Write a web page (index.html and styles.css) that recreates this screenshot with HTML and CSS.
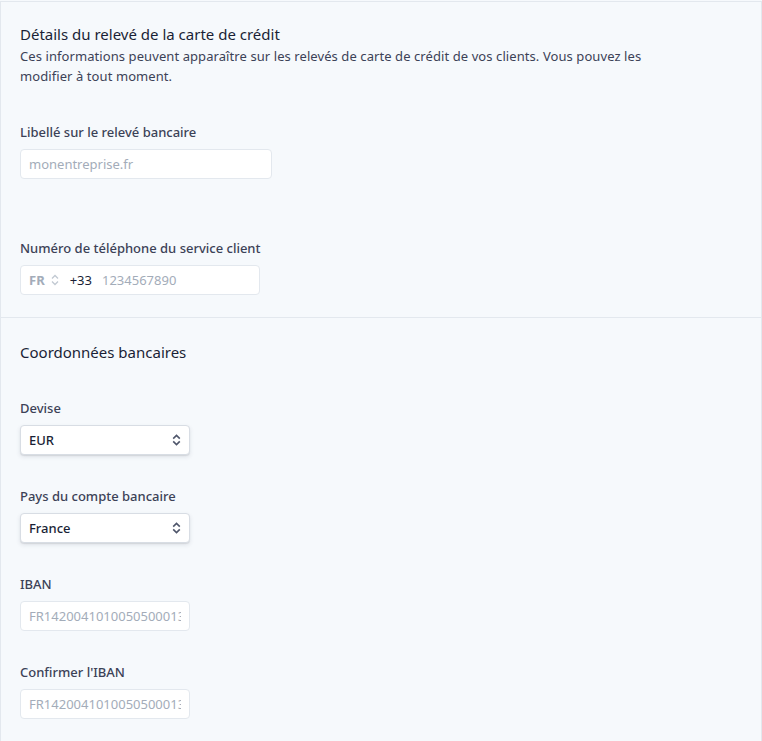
FILE: index.html
```html
<!DOCTYPE html>
<html lang="fr">
<head>
	<meta charset="UTF-8">
	<title>Paramètres de paiement</title>
	<link rel="stylesheet" href="styles.css">
</head>
<body>
<div class="panel">
	<div class="section">
		<h2 class="section-title">Détails du relevé de la carte de crédit</h2>
		<p class="section-desc">Ces informations peuvent apparaître sur les relevés de carte de crédit de vos clients. Vous pouvez les modifier à tout moment.</p>

		<div class="field field-first">
			<label class="label">Libellé sur le relevé bancaire</label>
			<input class="input input-long" type="text" placeholder="monentreprise.fr">
		</div>

		<div class="field field-phone">
			<label class="label">Numéro de téléphone du service client</label>
			<div class="input phone">
				<span class="phone-country">FR</span>
				<svg class="phone-arrows" width="8" height="12" viewBox="0 0 8 12">
					<path d="M1 4.5 L4 1.5 L7 4.5 M1 7.5 L4 10.5 L7 7.5" fill="none" stroke="#c1c9d2" stroke-width="1.3"/>
				</svg>
				<span class="phone-code">+33</span>
				<input class="phone-number" type="text" placeholder="1234567890">
			</div>
		</div>
	</div>

	<div class="section">
		<h2 class="section-title">Coordonnées bancaires</h2>

		<div class="field field-first">
			<label class="label">Devise</label>
			<div class="select">
				<span>EUR</span>
				<svg width="9" height="12" viewBox="0 0 9 12">
					<path d="M1.2 4.6 L4.5 1.4 L7.8 4.6 M1.2 7.4 L4.5 10.6 L7.8 7.4" fill="none" stroke="#4f566b" stroke-width="1.6"/>
				</svg>
			</div>
		</div>

		<div class="field">
			<label class="label">Pays du compte bancaire</label>
			<div class="select">
				<span>France</span>
				<svg width="9" height="12" viewBox="0 0 9 12">
					<path d="M1.2 4.6 L4.5 1.4 L7.8 4.6 M1.2 7.4 L4.5 10.6 L7.8 7.4" fill="none" stroke="#4f566b" stroke-width="1.6"/>
				</svg>
			</div>
		</div>

		<div class="field">
			<label class="label">IBAN</label>
			<input class="input input-short" type="text" placeholder="FR1420041010050500013M02606">
		</div>

		<div class="field">
			<label class="label">Confirmer l'IBAN</label>
			<input class="input input-short" type="text" placeholder="FR1420041010050500013M02606">
		</div>
	</div>
</div>
</body>
</html>
```

FILE: styles.css
```css
* {
	margin: 0;
	padding: 0;
	box-sizing: border-box;
}

body {
	background-color: #f6f9fc;
	font-family: "Noto Sans", "Open Sans", sans-serif;
	color: #3c4257;
	padding-top: 1px;
}

.panel {
	width: 762px;
	min-height: 740px;
	border: 1px solid #e3e8ee;
	border-bottom: none;
	background-color: #f6f9fc;
}

.section {
	padding: 22px 19px 22px;
}
.section + .section {
	border-top: 1px solid #e3e8ee;
	padding-top: 24px;
}

.section-title {
	font-size: 15px;
	line-height: 20px;
	font-weight: 400;
	color: #1a1f36;
}
.section-desc {
	margin-top: 2px;
	font-size: 13px;
	line-height: 20px;
	letter-spacing: 0.08px;
	color: #3c4257;
	max-width: 640px;
}

.field {
	margin-top: 32px;
}
.field-first {
	margin-top: 37px;
}
.field-phone {
	margin-top: 60px;
}

.label {
	display: block;
	font-size: 13px;
	line-height: 18px;
	font-weight: 500;
	color: #3c4257;
	margin-bottom: 8px;
}

.input {
	display: block;
	height: 30px;
	padding: 0 8px;
	border: 1px solid #e3e8ee;
	border-radius: 4px;
	background-color: #fff;
	font-family: inherit;
	font-size: 13px;
	color: #1a1f36;
	outline: none;
}
.input::placeholder {
	color: #a3acb9;
}
.input-long {
	width: 252px;
}
.input-short {
	width: 170px;
}

.phone {
	width: 240px;
	display: flex;
	align-items: center;
}
.phone-country {
	font-weight: 700;
	color: #a3acb9;
}
.phone-arrows {
	margin-left: 6px;
}
.phone-code {
	margin-left: 11px;
	color: #1a1f36;
}
.phone-number {
	margin-left: 10px;
	border: none;
	outline: none;
	background: none;
	font-family: inherit;
	font-size: 13px;
	width: 120px;
}
.phone-number::placeholder {
	color: #a3acb9;
}

.select {
	width: 170px;
	height: 30px;
	padding: 0 8px 0 8px;
	display: flex;
	align-items: center;
	justify-content: space-between;
	background-color: #fff;
	border: 1px solid #d8dde4;
	border-radius: 4px;
	box-shadow: 0 2px 4px rgba(60, 66, 87, 0.12), 0 1px 1px rgba(0, 0, 0, 0.08);
	font-size: 13px;
	font-weight: 500;
	color: #1a1f36;
}
```
